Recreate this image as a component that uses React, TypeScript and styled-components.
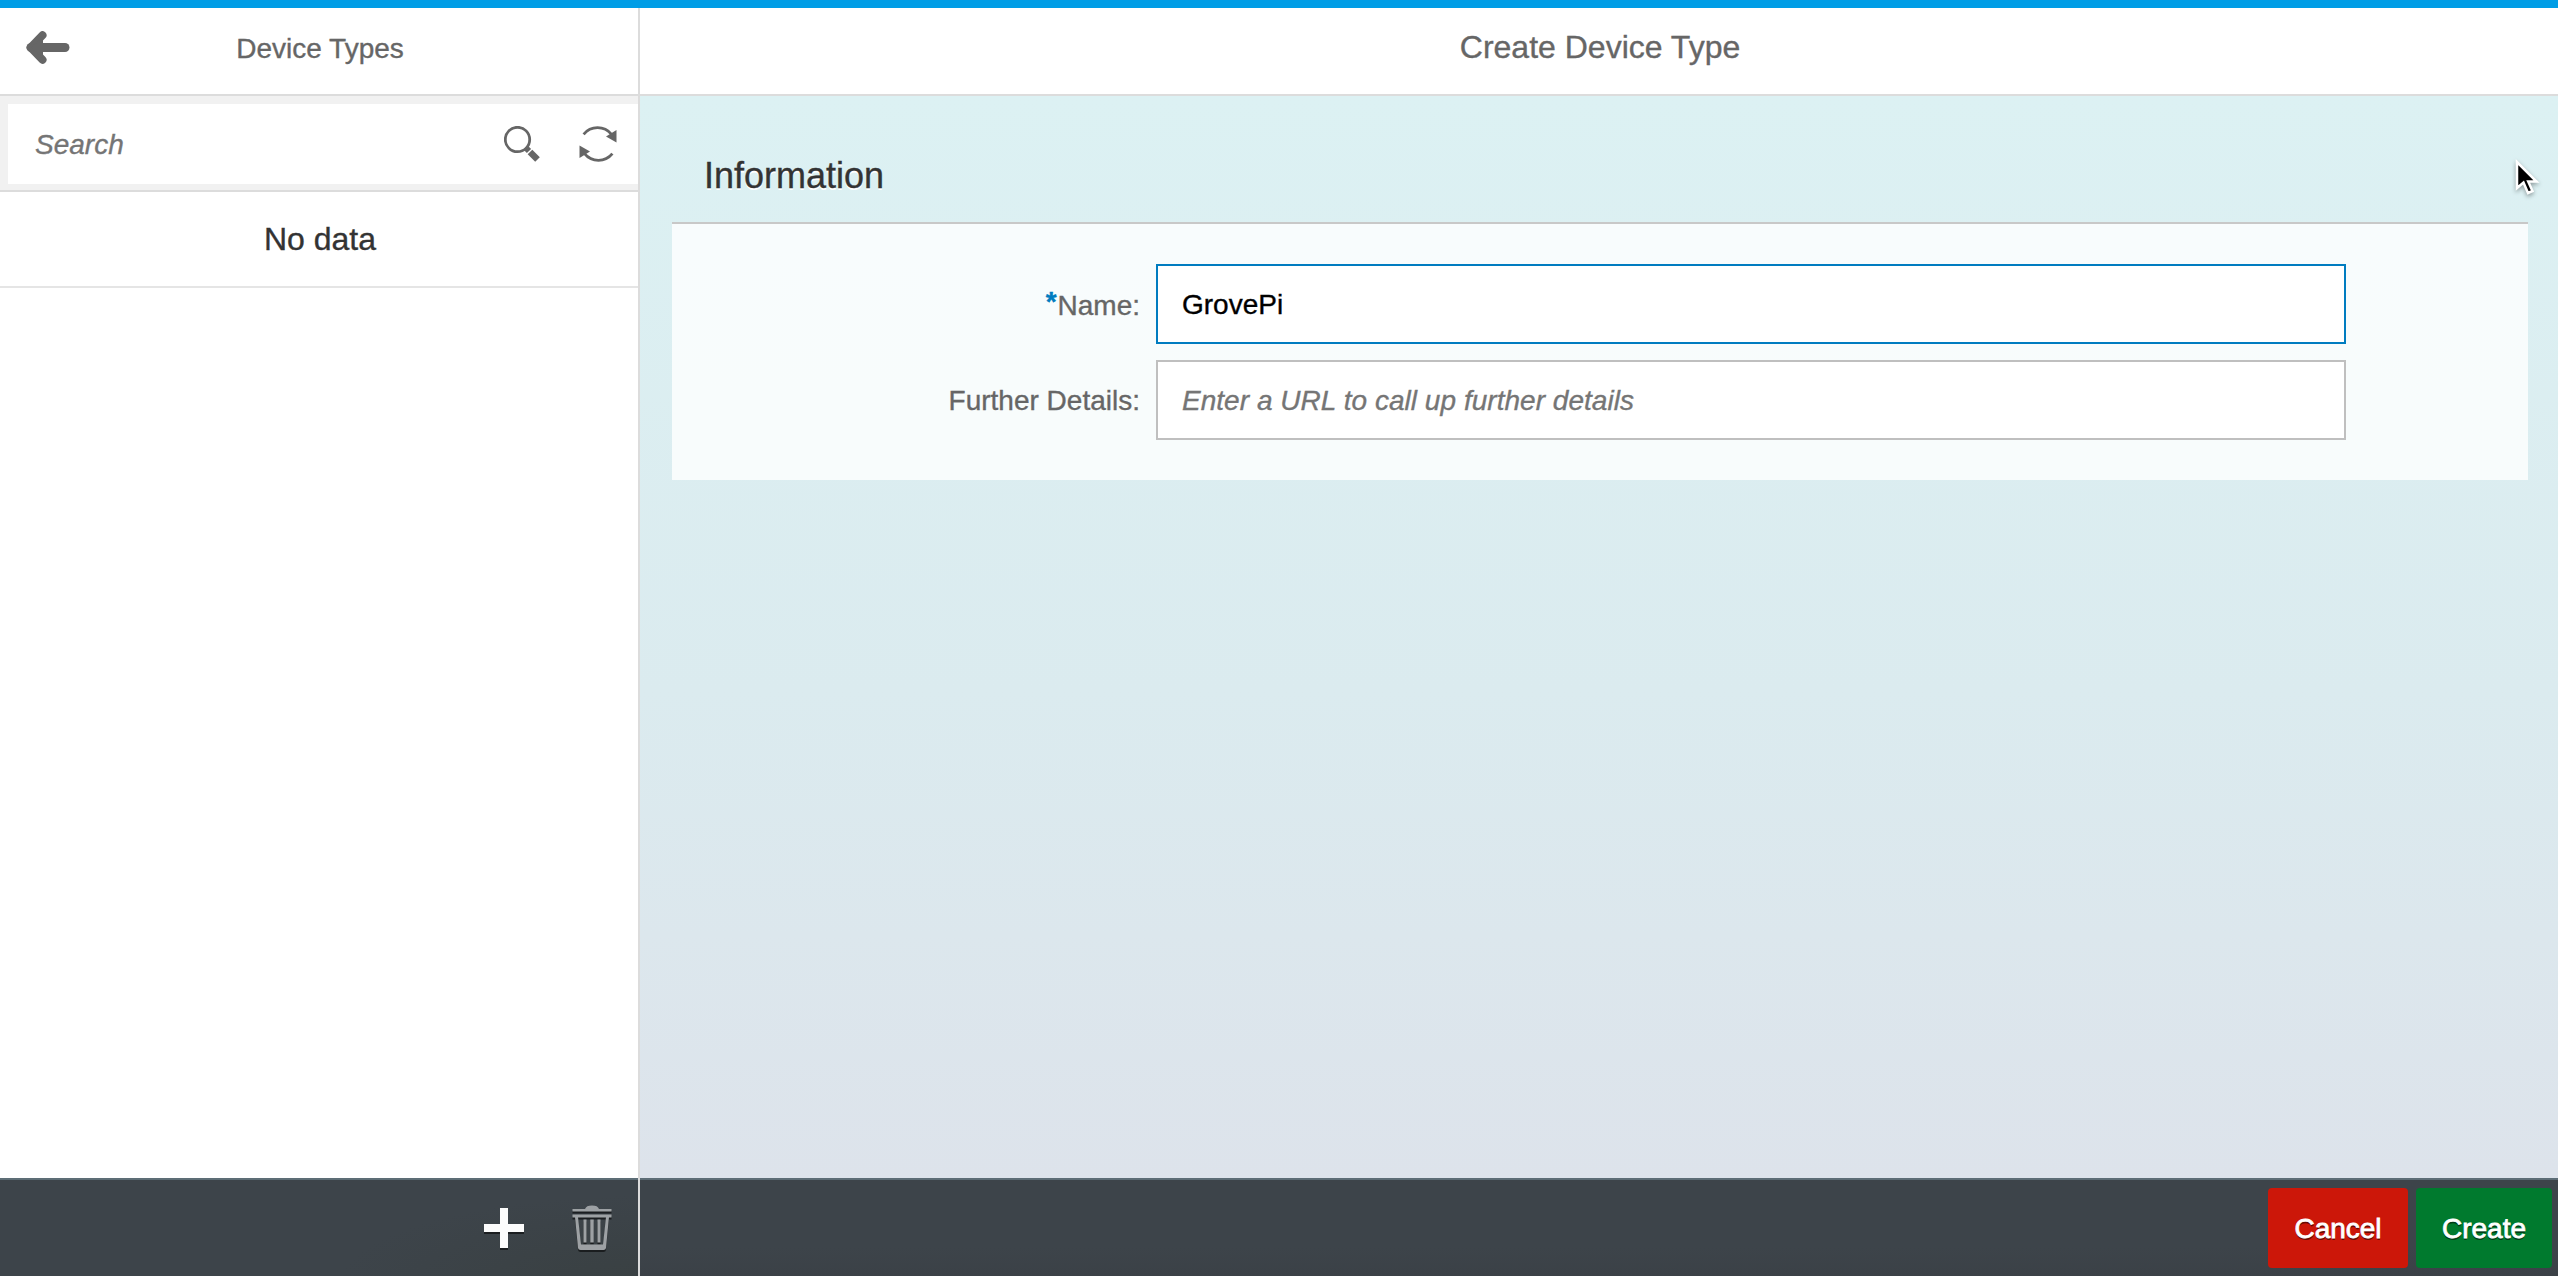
import React from "react";
import styled, { createGlobalStyle } from "styled-components";

const GlobalStyle = createGlobalStyle`
  *, *::before, *::after { box-sizing: border-box; }
  body {
    margin: 0;
    overflow: hidden;
    font-family: "Liberation Sans", Arial, Helvetica, sans-serif;
    color: #333;
    -webkit-text-stroke: 0.35px currentColor;
  }
  input { -webkit-text-stroke: inherit; }
`;

const Shell = styled.div`
  position: relative;
  display: flex;
  height: 100vh;
  border-top: 8px solid #009de6;
  background: #fff;
`;

const Master = styled.aside`
  display: flex;
  flex-direction: column;
  width: 640px;
  flex: none;
  border-right: 2px solid #dcdcdc;
  background: #fff;
`;

const Detail = styled.main`
  display: flex;
  flex-direction: column;
  flex: 1;
  min-width: 0;
`;

const Header = styled.header`
  display: grid;
  grid-template-columns: 96px 1fr 96px;
  align-items: center;
  height: 88px;
  flex: none;
  padding-bottom: 6px;
  background: #fff;
  border-bottom: 2px solid #dcdcdc;
`;

const Title = styled.h1<{ $size: number; $inset: string }>`
  grid-column: 2;
  margin: 0;
  padding: ${(p) => p.$inset};
  text-align: center;
  font-size: ${(p) => p.$size}px;
  font-weight: 400;
  line-height: 40px;
  color: #666;
`;

const IconButton = styled.button`
  display: flex;
  align-items: center;
  justify-content: center;
  padding: 0;
  border: 0;
  background: none;
  color: #666;
`;

const SearchBar = styled.div`
  height: 96px;
  flex: none;
  padding: 8px 0 6px 8px;
  background: #f1f1f1;
  border-bottom: 2px solid #dcdcdc;
`;

const SearchField = styled.div`
  display: flex;
  height: 80px;
  padding: 0 2px 0 27px;
  background: #fff;
`;

const SearchInput = styled.input`
  flex: 1;
  min-width: 0;
  padding: 1px 0 0;
  border: 0;
  outline: 0;
  background: none;
  font: 28px "Liberation Sans", Arial, sans-serif;
  &::placeholder { color: #757575; font-style: italic; opacity: 1; }
`;

const SearchAction = styled(IconButton)`
  width: 76px;
`;

const EmptyRow = styled.div`
  display: flex;
  align-items: center;
  justify-content: center;
  height: 96px;
  flex: none;
  padding-left: 2px;
  border-bottom: 2px solid #e5e5e5;
  font-size: 32px;
`;

const Spacer = styled.div`
  flex: 1;
`;

const Footer = styled.footer<{ $shade?: boolean }>`
  display: flex;
  align-items: center;
  justify-content: flex-end;
  gap: 8px;
  height: 98px;
  flex: none;
  padding-right: 6px;
  border-top: 2px solid #5d6d76;
  background: ${(p) =>
    p.$shade
      ? "radial-gradient(ellipse 300px 90px at 100% 110%, #394042, rgba(57,64,66,0)), #3d444a"
      : "linear-gradient(#3d444a 70%, #3b4147)"};
`;

const FooterIcon = styled(IconButton)<{ $dim?: boolean }>`
  width: 80px;
  height: 80px;
  color: ${(p) => (p.$dim ? "#9da1a4" : "#fcfcfc")};
  svg { filter: drop-shadow(0 2px 0 rgba(0, 0, 0, 0.55)); }
`;

const ActionButton = styled.button<{ $tone: string; $width: number }>`
  width: ${(p) => p.$width}px;
  height: 80px;
  padding: 1px 0 0;
  border: 0;
  border-radius: 4px;
  background: ${(p) => p.$tone};
  color: #fff;
  font: 28px "Liberation Sans", Arial, sans-serif;
  -webkit-text-stroke: 0.8px #fff;
  text-shadow: 0 2px 0 rgba(0, 0, 0, 0.5);
`;

const Content = styled.section`
  flex: 1;
  padding: 30px 30px 0 32px;
  background: linear-gradient(#dcf1f3, #dbebef 55%, #dde3eb);
`;

const SectionTitle = styled.h2`
  height: 96px;
  margin: 0;
  padding-left: 32px;
  font-size: 36px;
  font-weight: 400;
  line-height: 100px;
  color: #333;
  text-shadow: 0 2px 0 #fff;
`;

const FormPanel = styled.form`
  display: grid;
  grid-template-columns: 468px 1190px;
  grid-auto-rows: 80px;
  align-items: center;
  column-gap: 16px;
  row-gap: 16px;
  height: 258px;
  padding-top: 40px;
  border-top: 2px solid #c8c8c8;
  background: rgba(255, 255, 255, 0.8);
`;

const Label = styled.label`
  padding-top: 1px;
  text-align: right;
  font-size: 28px;
  line-height: 32px;
  color: #666;
`;

const Required = styled.span`
  margin-right: 1px;
  line-height: 1;
  vertical-align: 4px;
  color: #007cc0;
  font-weight: 700;
`;

const Field = styled.input<{ $active?: boolean }>`
  width: 100%;
  height: 80px;
  padding: 1px 24px 0;
  border: 2px solid ${(p) => (p.$active ? "#007cc0" : "#bfbfbf")};
  border-radius: 0;
  outline: 0;
  background: #fff;
  color: #000;
  font: 28px "Liberation Sans", Arial, sans-serif;
  &::placeholder { color: #757575; font-style: italic; opacity: 1; letter-spacing: 0.03px; }
`;

const Pointer = styled.svg`
  position: absolute;
  left: 2512px;
  top: 150px;
  filter: drop-shadow(0 2px 2px rgba(0, 0, 0, 0.35));
`;

const BackIcon = () => (
  <svg width="44" height="34" viewBox="0 0 44 34" fill="none" stroke="currentColor" strokeLinecap="round" strokeLinejoin="round">
    <path d="M5 16.500H39" strokeWidth="9" />
    <path d="M16.500 4.200L4.700 16.500L16.500 28.800" strokeWidth="8" />
    <path d="M5 16.500L17 6V27Z" fill="currentColor" stroke="none" />
  </svg>
);

const SearchIcon = () => (
  <svg width="36" height="36" viewBox="0 0 36 36" fill="none" stroke="currentColor">
    <circle cx="13.500" cy="13.500" r="12.200" strokeWidth="2.800" />
    <path d="M21.500 21.500L25 25" strokeWidth="6" />
    <path d="M26 26L33.500 33.500" strokeWidth="6.500" />
  </svg>
);

const RefreshIcon = () => (
  <svg width="40" height="40" viewBox="0 0 40 40" fill="none" stroke="currentColor" strokeWidth="2.800">
    <path d="M5.600 10.300A18 18 0 0 1 33.500 10.300" />
    <path d="M34.400 29.700A18 18 0 0 1 6.500 29.700" />
    <path d="M38.500 6V18.500L28 12.500Z" fill="currentColor" stroke="none" />
    <path d="M1.500 34V21.500L12 27.500Z" fill="currentColor" stroke="none" />
  </svg>
);

const AddIcon = () => (
  <svg width="40" height="40" viewBox="0 0 40 40" fill="currentColor">
    <path d="M16 0H24V16H40V24H24V40H16V24H0V16H16Z" />
  </svg>
);

const TrashIcon = () => (
  <svg width="40" height="46" viewBox="0 0 40 46" fill="currentColor">
    <path d="M0.500 4H13C14 1.500 16 0.500 20 0.500S26 1.500 27 4H39.500V6.500H0.500Z" />
    <path d="M0.500 9.500H39.500V12.500H0.500Z" />
    <path fillRule="evenodd" d="M3 12H37L34 43Q33.700 45 31.500 45H8.500Q6.300 45 6 43ZM6 12L9 39.500H31L34 12Z" />
    <path d="M11.500 14.500H14.500V37.500H11.500ZM18.300 14.500H21.700V37.500H18.300ZM25.500 14.500H28.500V37.500H25.500Z" />
  </svg>
);

const BackButton = styled(IconButton)`
  grid-column: 1;
  grid-row: 1;
`;

const App = () => (
  <>
    <GlobalStyle />
    <Shell>
      <Master>
        <Header>
          <BackButton aria-label="Back">
            <BackIcon />
          </BackButton>
          <Title $size={28} $inset="1px 0 0 2px">Device Types</Title>
        </Header>
        <SearchBar>
          <SearchField>
            <SearchInput placeholder="Search" />
            <SearchAction aria-label="Search">
              <SearchIcon />
            </SearchAction>
            <SearchAction aria-label="Refresh">
              <RefreshIcon />
            </SearchAction>
          </SearchField>
        </SearchBar>
        <EmptyRow>No data</EmptyRow>
        <Spacer />
        <Footer $shade>
          <FooterIcon aria-label="Add">
            <AddIcon />
          </FooterIcon>
          <FooterIcon $dim aria-label="Delete">
            <TrashIcon />
          </FooterIcon>
        </Footer>
      </Master>
      <Detail>
        <Header>
          <Title $size={32} $inset="0 0 2px 2px">Create Device Type</Title>
        </Header>
        <Content>
          <SectionTitle>Information</SectionTitle>
          <FormPanel>
            <Label htmlFor="name">
              <Required>*</Required>Name:
            </Label>
            <Field id="name" $active defaultValue="GrovePi" />
            <Label htmlFor="details">Further Details:</Label>
            <Field id="details" placeholder="Enter a URL to call up further details" />
          </FormPanel>
        </Content>
        <Footer>
          <ActionButton type="button" $tone="#cc1709" $width={140}>
            Cancel
          </ActionButton>
          <ActionButton type="button" $tone="#007a2e" $width={136}>
            Create
          </ActionButton>
        </Footer>
      </Detail>
      <Pointer width="30" height="40" viewBox="0 0 30 40">
        <path d="M5 4V30L11.500 24.500L16 35L20.500 33L16.200 23.500H24.500Z" fill="#000" stroke="#fff" strokeWidth="2.500" />
      </Pointer>
    </Shell>
  </>
);

export default App;
